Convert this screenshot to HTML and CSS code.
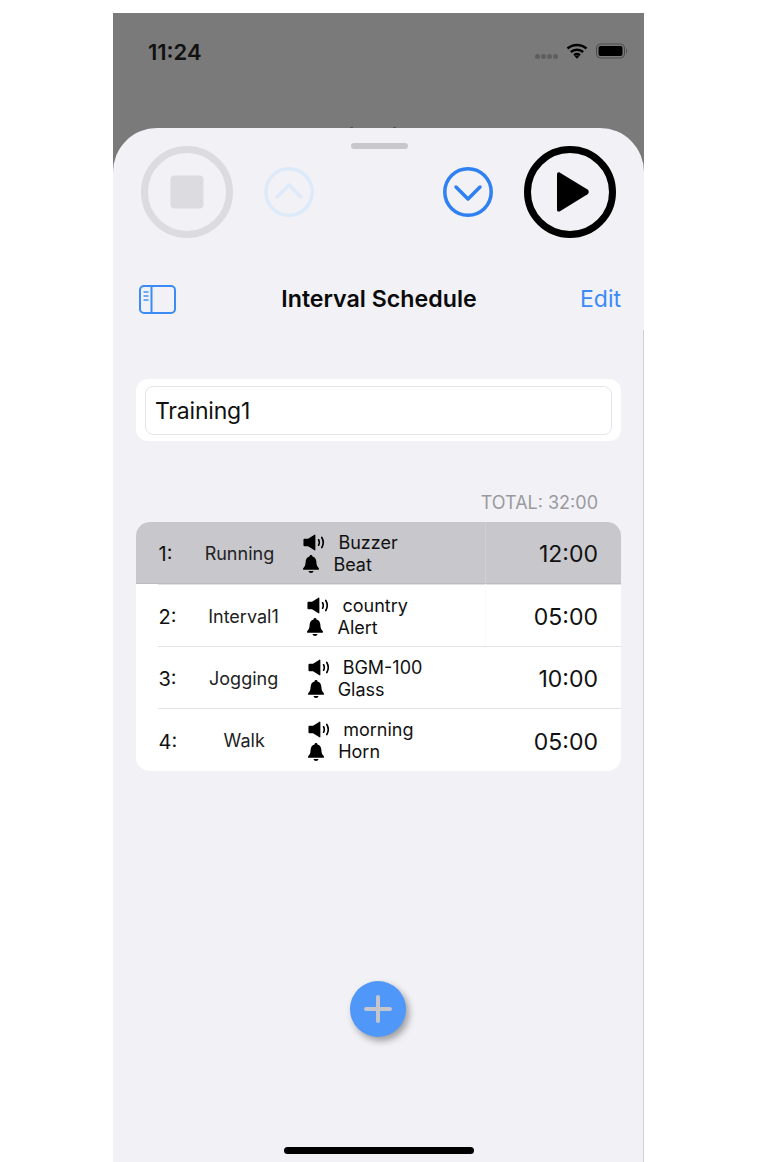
FILE: index.html
```html
<!DOCTYPE html>
<html lang="en">
<head>
<meta charset="utf-8">
<title>Interval Schedule</title>
<link rel="stylesheet" href="styles.css">
</head>
<body>
<svg class="defs" aria-hidden="true">
  <symbol id="spk" viewBox="0 0 24 18">
    <path d="M1.500 5h4L12.500 .5c.5-.3 1 0 1 .6v15.800c0 .6-.5.9-1 .6L5.500 13h-4c-.6 0-1-.4-1-1V6c0-.6.4-1 1-1z" fill="#000"/>
    <path d="M17 6c1 1.900 1 4.100 0 6M20.500 3.500c2 3.400 2 7.600 0 11" fill="none" stroke="#000" stroke-width="1.800" stroke-linecap="round"/>
  </symbol>
  <symbol id="bell" viewBox="0 0 20 20">
    <path d="M10 1c.9 0 1.400.6 1.500 1.400 2.700.7 3.800 3 3.900 5.700.1 3 .6 4.300 2.400 6.100.5.600.2 1.600-.8 1.600H3c-1 0-1.300-1-.8-1.600C4 12.400 4.500 11.100 4.600 8.100c.1-2.700 1.200-5 3.900-5.700C8.600 1.600 9.100 1 10 1z" fill="#000"/>
    <path d="M7.500 17h5c-.2 1.300-1.200 2-2.500 2s-2.300-.7-2.500-2z" fill="#000"/>
  </symbol>
</svg>
<div class="phone">
  <header class="status">
    <span class="clock">11:24</span>
    <div class="status-icons">
      <span class="signal"><i></i><i></i><i></i><i></i></span>
      <svg class="wifi" width="22" height="16" viewBox="0 0 22 16"><path d="M1.500 5.500C7 .8 15 .8 20.500 5.500M4.800 9C8.400 6 13.600 6 17.200 9M8 12.200c1.800-1.400 4.200-1.400 6 0" fill="none" stroke="#000" stroke-width="2.400"/><path d="M8.700 13.200 11 15.800l2.300-2.600c-1.400-1-3.200-1-4.600 0z" fill="#000"/></svg>
      <svg class="battery" width="32" height="16" viewBox="0 0 32 16"><rect x=".5" y="1" width="28" height="14" rx="4" fill="none" stroke="#4a4a4a"/><rect x="2.500" y="3" width="24" height="10" rx="2" fill="#000"/><path d="M30 5.500c1.200.4 1.200 4.600 0 5z" fill="#4a4a4a"/></svg>
    </div>
  </header>
  <main class="sheet">
    <span class="speck speck-a"></span>
    <span class="speck speck-b"></span>
    <span class="edge"></span>
    <div class="grabber"></div>
    <div class="controls">
      <svg class="big" width="92" height="92" viewBox="0 0 92 92"><circle cx="46" cy="46" r="42.500" fill="none" stroke="#dcdce0" stroke-width="7"/><rect x="29.500" y="29.500" width="33" height="33" rx="4" fill="#dcdce0"/></svg>
      <svg class="small up" width="50" height="50" viewBox="0 0 50 50"><circle cx="25" cy="25" r="23.200" fill="none" stroke="#ddeafa" stroke-width="3.500"/><path d="M13 30 25 18l12 12" fill="none" stroke="#ddeafa" stroke-width="3.500" stroke-linecap="round" stroke-linejoin="round"/></svg>
      <span class="spacer"></span>
      <svg class="small down" width="50" height="50" viewBox="0 0 50 50"><circle cx="25" cy="25" r="23.200" fill="none" stroke="#2f80f2" stroke-width="3.500"/><path d="M13 20 25 32l12-12" fill="none" stroke="#2f80f2" stroke-width="3.500" stroke-linecap="round" stroke-linejoin="round"/></svg>
      <svg class="big play" width="92" height="92" viewBox="0 0 92 92"><circle cx="46" cy="46" r="42.500" fill="none" stroke="#000" stroke-width="7"/><path d="M33 28.500c0-2 1.500-2.700 3-1.800l27.500 16.900c1.700 1.100 1.700 3.600 0 4.700L36 65.200c-1.500.9-3 .2-3-1.800z" fill="#000"/></svg>
    </div>
    <nav class="navbar">
      <svg width="37" height="29" viewBox="0 0 37 29"><rect x="1" y="1" width="35" height="27" rx="4" fill="none" stroke="#3b8bf6" stroke-width="2"/><path d="M12.500 1v27" stroke="#3b8bf6" stroke-width="2"/><path d="M4.500 7h5M4.500 11h5M4.500 15h5" stroke="#6ba8f8" stroke-width="1.800"/></svg>
      <h1 class="title">Interval Schedule</h1>
      <a class="edit">Edit</a>
    </nav>
    <section class="name-card">
      <div class="name-input">Training1</div>
    </section>
    <p class="total">TOTAL: 32:00</p>
    <ul class="list">
      <li class="row selected">
        <span class="index">1:</span><span class="name">Running</span>
        <div class="sounds">
          <div class="line"><svg class="spk"><use href="#spk"/></svg><span>Buzzer</span></div>
          <div class="line"><svg class="bell"><use href="#bell"/></svg><span>Beat</span></div>
        </div>
        <span class="time">12:00</span>
      </li>
      <li class="row">
        <span class="index">2:</span><span class="name">Interval1</span>
        <div class="sounds">
          <div class="line"><svg class="spk"><use href="#spk"/></svg><span>country</span></div>
          <div class="line"><svg class="bell"><use href="#bell"/></svg><span>Alert</span></div>
        </div>
        <span class="time">05:00</span>
      </li>
      <li class="row">
        <span class="index">3:</span><span class="name">Jogging</span>
        <div class="sounds">
          <div class="line"><svg class="spk"><use href="#spk"/></svg><span>BGM-100</span></div>
          <div class="line"><svg class="bell"><use href="#bell"/></svg><span>Glass</span></div>
        </div>
        <span class="time">10:00</span>
      </li>
      <li class="row">
        <span class="index">4:</span><span class="name">Walk</span>
        <div class="sounds">
          <div class="line"><svg class="spk"><use href="#spk"/></svg><span>morning</span></div>
          <div class="line"><svg class="bell"><use href="#bell"/></svg><span>Horn</span></div>
        </div>
        <span class="time">05:00</span>
      </li>
    </ul>
    <div class="fab-wrap">
      <button class="fab" aria-label="Add"><svg width="28" height="28" viewBox="0 0 28 28"><path d="M14 2v24M2 14h24" stroke="#c4c6cc" stroke-width="4" stroke-linecap="round"/></svg></button>
    </div>
    <div class="home"></div>
  </main>
</div>
</body>
</html>
```

FILE: styles.css
```css
* { box-sizing: border-box; }
html, body { margin: 0; padding: 0; height: 100%; overflow: hidden; background: #fff; }
body { font-family: Inter, "Liberation Sans", sans-serif; color: #000; padding: 13px 126px 0 113px; }
.defs { display: none; }
.phone { width: 531px; height: 1149px; background: #7a7a7a; display: flex; flex-direction: column; }
.status { height: 115px; flex: none; display: flex; justify-content: space-between; padding: 27px 16px 0 35px; }
.clock { font-size: 22px; font-weight: 600; line-height: 24px; color: #111; }
.status-icons { display: flex; align-items: center; height: 22px; gap: 8px; }
.signal { display: flex; gap: 1px; margin-top: 11px; }
.signal i { width: 5px; height: 5px; border-radius: 50%; background: #5e5e5e; }
.sheet { flex: 1; background: #f1f1f6; border-radius: 44px 44px 0 0; display: flex; flex-direction: column; align-items: stretch; position: relative; }
.speck { position: absolute; top: -1px; width: 3px; height: 1px; background: #555; }
.speck-a { left: 237px; }
.speck-b { left: 280px; }
.edge { position: absolute; top: 202px; bottom: 0; right: 0; width: 1px; background: #d0d0d4; }
.grabber { width: 57px; height: 6px; background: #c8c8cc; border-radius: 3px; margin: 15px 0 0 238px; }
.controls { display: flex; align-items: center; padding: 0 28px 0 28px; margin-top: -3px; height: 92px; }
.controls .up { margin-left: 31px; }
.controls .spacer { flex: 1; }
.controls .play { margin-left: 31px; }
.navbar { display: flex; align-items: center; justify-content: space-between; margin-top: 47px; height: 29px; padding: 0 23px 0 26px; position: relative; }
.title { position: absolute; left: 0; right: 0; text-align: center; margin: 0 0 0 1px; font-size: 23.200px; font-weight: 600; line-height: 29px; color: #0a0a0a; }
.edit { font-size: 23px; color: #3b8bf6; line-height: 29px; }
.name-card { margin: 65px 23px 0 23px; height: 62px; background: #fff; border-radius: 12px; padding: 7px 9px; }
.name-input { height: 49px; border: 1px solid #e6e6e8; border-radius: 8px; padding: 0 9px; font-size: 23px; line-height: 49px; letter-spacing: -.2px; color: #111; }
.total { margin: 51px 46px 0 0; text-align: right; font-size: 18px; line-height: 22px; color: #9a9a9e; }
.list { list-style: none; margin: 8px 23px 0 23px; padding: 0; background: #fff; border-radius: 14px; overflow: hidden; }
.row { display: flex; align-items: center; height: 62px; padding: 0 23px 0 22.500px; position: relative; }
.row + .row { padding-top: 2px; }
.row:last-child { height: 63px; }
.row + .row::before { content: ""; position: absolute; left: 22px; right: 0; top: 0; height: 1px; background: #e2e2e5; }
.row.selected { background: #c7c7cc; box-shadow: inset 0 -1px 0 #bcbcc0; }
.row.selected::after { content: ""; position: absolute; left: 349px; top: 0; bottom: 0; width: 1px; background: #d0d0d4; }
.row:nth-child(2)::after { content: ""; position: absolute; left: 349px; top: 0; bottom: 0; width: 1px; background: #fafafb; }
.index { font-size: 20px; color: #111; padding-top: 2px; }
.name { width: 120px; text-align: center; font-size: 18px; color: #222; margin-left: 7px; flex: none; }
.sounds { display: flex; flex-direction: column; margin-left: 4px; }
.line { display: flex; align-items: center; height: 22px; font-size: 18px; color: #111; }
.spk { width: 22px; height: 17px; }
.bell { width: 20px; height: 20px; margin-left: -2px; }
.line .spk + span { margin-left: 13px; }
.line .bell + span { margin-left: 12px; }
.time { margin-left: auto; font-size: 23px; color: #111; padding-top: 2px; }
.fab-wrap { margin-top: 210px; display: flex; justify-content: center; padding-right: 2px; }
.fab { width: 56px; height: 56px; border: 0; padding: 0; border-radius: 50%; background: #4f97f9; box-shadow: 3px 4px 7px rgba(0,0,0,.35); display: flex; align-items: center; justify-content: center; }
.home { position: absolute; left: 171px; bottom: 8px; width: 190px; height: 7px; border-radius: 4px; background: #000; }
```
